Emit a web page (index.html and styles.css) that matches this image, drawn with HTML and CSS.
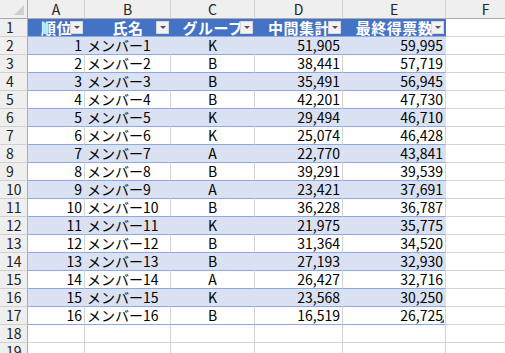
FILE: index.html
```html
<!DOCTYPE html>
<html lang="ja">
<head>
<meta charset="utf-8">
<link rel="stylesheet" href="styles.css">
</head>
<body>
<div class="sheet">
  <div class="ch corner"><span class="tri"></span></div>
  <div class="ch">A</div>
  <div class="ch">B</div>
  <div class="ch">C</div>
  <div class="ch">D</div>
  <div class="ch">E</div>
  <div class="ch">F</div>

  <div class="rh">1</div>
  <div class="th">順位<span class="dd"></span></div>
  <div class="th">氏名<span class="dd"></span></div>
  <div class="th">グループ<span class="dd"></span></div>
  <div class="th">中間集計<span class="dd"></span></div>
  <div class="th">最終得票数<span class="dd"></span></div>
  <div class="gc"></div>

  <div class="rh">2</div><div class="td num band">1</div><div class="td name band">メンバー1</div><div class="td grp band">K</div><div class="td num band">51,905</div><div class="td num band">59,995</div><div class="gc"></div>
  <div class="rh">3</div><div class="td num">2</div><div class="td name">メンバー2</div><div class="td grp">B</div><div class="td num">38,441</div><div class="td num">57,719</div><div class="gc"></div>
  <div class="rh">4</div><div class="td num band">3</div><div class="td name band">メンバー3</div><div class="td grp band">B</div><div class="td num band">35,491</div><div class="td num band">56,945</div><div class="gc"></div>
  <div class="rh">5</div><div class="td num">4</div><div class="td name">メンバー4</div><div class="td grp">B</div><div class="td num">42,201</div><div class="td num">47,730</div><div class="gc"></div>
  <div class="rh">6</div><div class="td num band">5</div><div class="td name band">メンバー5</div><div class="td grp band">K</div><div class="td num band">29,494</div><div class="td num band">46,710</div><div class="gc"></div>
  <div class="rh">7</div><div class="td num">6</div><div class="td name">メンバー6</div><div class="td grp">K</div><div class="td num">25,074</div><div class="td num">46,428</div><div class="gc"></div>
  <div class="rh">8</div><div class="td num band">7</div><div class="td name band">メンバー7</div><div class="td grp band">A</div><div class="td num band">22,770</div><div class="td num band">43,841</div><div class="gc"></div>
  <div class="rh">9</div><div class="td num">8</div><div class="td name">メンバー8</div><div class="td grp">B</div><div class="td num">39,291</div><div class="td num">39,539</div><div class="gc"></div>
  <div class="rh">10</div><div class="td num band">9</div><div class="td name band">メンバー9</div><div class="td grp band">A</div><div class="td num band">23,421</div><div class="td num band">37,691</div><div class="gc"></div>
  <div class="rh">11</div><div class="td num">10</div><div class="td name">メンバー10</div><div class="td grp">B</div><div class="td num">36,228</div><div class="td num">36,787</div><div class="gc"></div>
  <div class="rh">12</div><div class="td num band">11</div><div class="td name band">メンバー11</div><div class="td grp band">K</div><div class="td num band">21,975</div><div class="td num band">35,775</div><div class="gc"></div>
  <div class="rh">13</div><div class="td num">12</div><div class="td name">メンバー12</div><div class="td grp">B</div><div class="td num">31,364</div><div class="td num">34,520</div><div class="gc"></div>
  <div class="rh">14</div><div class="td num band">13</div><div class="td name band">メンバー13</div><div class="td grp band">B</div><div class="td num band">27,193</div><div class="td num band">32,930</div><div class="gc"></div>
  <div class="rh">15</div><div class="td num">14</div><div class="td name">メンバー14</div><div class="td grp">A</div><div class="td num">26,427</div><div class="td num">32,716</div><div class="gc"></div>
  <div class="rh">16</div><div class="td num band">15</div><div class="td name band">メンバー15</div><div class="td grp band">K</div><div class="td num band">23,568</div><div class="td num band">30,250</div><div class="gc"></div>
  <div class="rh">17</div><div class="td num">16</div><div class="td name">メンバー16</div><div class="td grp">B</div><div class="td num">16,519</div><div class="td num last">26,725<span class="resize"></span></div><div class="gc"></div>

  <div class="rh">18</div><div class="gc"></div><div class="gc"></div><div class="gc"></div><div class="gc"></div><div class="gc"></div><div class="gc"></div>
  <div class="rh">19</div><div class="gc"></div><div class="gc"></div><div class="gc"></div><div class="gc"></div><div class="gc"></div><div class="gc"></div>
</div>
</body>
</html>
```

FILE: styles.css
```css
html, body {
  margin: 0;
  padding: 0;
  background: #ffffff;
  overflow: hidden;
}

.sheet {
  display: grid;
  grid-template-columns: 28px 57px 86px 84px 88px 103px 80px;
  grid-template-rows: 19px;
  grid-auto-rows: 18px;
  font-family: "Noto Sans CJK JP", "Liberation Sans", sans-serif;
  font-size: 14px;
  color: #000;
  width: 526px;
}

.sheet > div {
  box-sizing: border-box;
  line-height: 17px;
  white-space: nowrap;
  overflow: hidden;
  position: relative;
}

.ch {
  background: #efefef;
  border-right: 1px solid #d0d0d0;
  border-bottom: 1px solid #ababab;
  text-align: center;
  line-height: 18px !important;
  color: #222;
}

.corner {
  border-right: 1px solid #ababab;
}

.tri {
  position: absolute;
  right: 3px;
  bottom: 3px;
  width: 0;
  height: 0;
  border-left: 10px solid transparent;
  border-bottom: 10px solid #cfcfcf;
}

.rh {
  background: #efefef;
  border-right: 1px solid #ababab;
  border-bottom: 1px solid #d0d0d0;
  padding-left: 6px;
  color: #222;
}

.th {
  background: #4472c4;
  color: #ffffff;
  font-weight: bold;
  font-size: 15px;
  text-align: center;
  border-bottom: 1px solid #8ea9db;
  letter-spacing: 0.5px;
}

.dd {
  position: absolute;
  right: 2px;
  top: 2px;
  width: 13px;
  height: 13px;
  box-sizing: border-box;
  background: #f2f2f2;
  border: 1px solid #d6d6d6;
}

.dd::after {
  content: "";
  position: absolute;
  left: 3px;
  top: 4px;
  border-left: 3px solid transparent;
  border-right: 3px solid transparent;
  border-top: 3px solid #555;
}

.td {
  border-right: 1px solid #d4d4d4;
  border-bottom: 1px solid #8ea9db;
  padding: 0 2px;
}

.td.band {
  background: #d9e1f2;
  border-right-color: #d9e1f2;
}

.num {
  text-align: right;
}

.name {
  text-align: left;
}

.grp {
  text-align: center;
}

.gc {
  border-right: 1px solid #d4d4d4;
  border-bottom: 1px solid #d4d4d4;
}

.resize {
  position: absolute;
  right: 1px;
  bottom: 1px;
  width: 0;
  height: 0;
  border-left: 4px solid transparent;
  border-bottom: 4px solid #4a5b8f;
}
```
